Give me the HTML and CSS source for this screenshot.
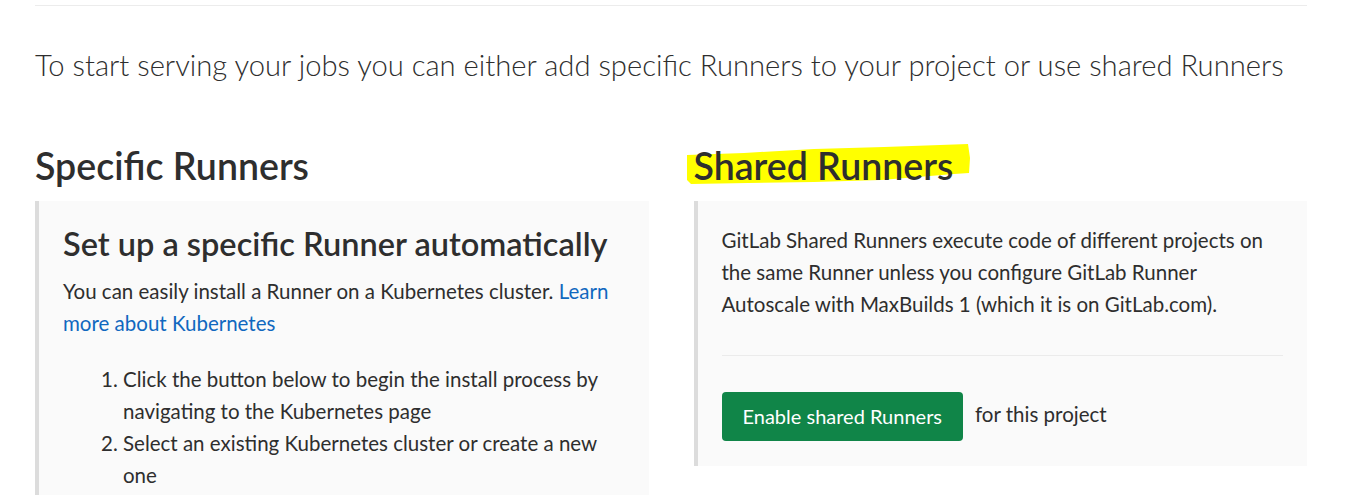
FILE: index.html
```html
<!DOCTYPE html>
<html lang="en">
<head>
<meta charset="utf-8">
<title>Runners</title>
<link rel="stylesheet" href="styles.css">
</head>
<body>
<div class="page">
  <hr class="top-rule">
  <p class="lead">To start serving your jobs you can either add specific Runners to your project or use shared Runners</p>
  <div class="columns">
    <section class="col">
      <h2 class="col-title">Specific Runners</h2>
      <div class="panel">
        <h3 class="panel-title">Set up a specific Runner automatically</h3>
        <p class="text">You can easily install a Runner on a Kubernetes cluster. <a class="link" href="#">Learn more about Kubernetes</a></p>
        <ol class="steps">
          <li>Click the button below to begin the install process by navigating to the Kubernetes page</li>
          <li>Select an existing Kubernetes cluster or create a new one</li>
        </ol>
      </div>
    </section>
    <section class="col">
      <h2 class="col-title highlighted">
        <svg class="marker" width="290" height="50" viewBox="0 0 290 50" aria-hidden="true"><polygon points="3,15 60,13 130,9 200,7 284,4 286,18 285,33 270,34 197,40 130,42 64,43 7,44 3,40" fill="#ffff00"/></svg>
        <span class="title-text">Shared Runners</span>
      </h2>
      <div class="panel panel-shared">
        <p class="text">GitLab Shared Runners execute code of different projects on the same Runner unless you configure GitLab Runner Autoscale with MaxBuilds 1 (which it is on GitLab.com).</p>
        <hr class="panel-rule">
        <div class="actions">
          <button class="btn-success" type="button">Enable shared Runners</button>
          <span class="after-btn">for this project</span>
        </div>
      </div>
    </section>
  </div>
</div>
</body>
</html>
```
FILE: styles.css
```css
html { overflow: hidden; }
body {
  margin: 0;
  background: #fff;
  color: #2e2e2e;
  font-family: Lato, "Open Sans", sans-serif;
  font-size: 20.5px;
  line-height: 32px;
}
.page {
  width: 1272px;
  padding: 5px 0 0 35px;
}
.top-rule {
  margin: 0;
  border: 0;
  border-top: 1px solid #ececec;
}
.lead {
  margin: 41px 0 0;
  font-size: 29.2px;
  font-weight: 300;
  line-height: 36px;
  color: #2e2e2e;
}
.columns {
  display: grid;
  grid-template-columns: 1fr 1fr;
  column-gap: 45px;
  margin-top: 60px;
}
.col-title {
  margin: 0 0 13px;
  font-size: 37.5px;
  font-weight: 600;
  line-height: 45px;
  color: #2e2e2e;
}
.highlighted {
  position: relative;
}
.marker {
  position: absolute;
  left: -10px;
  top: -3px;
}
.title-text {
  position: relative;
}
.panel {
  background: #fafafa;
  border-left: 4px solid #dcdcdc;
  padding: 25px 24px;
}
.panel-shared {
  padding-top: 23px;
}
.panel-title {
  margin: -1px 0 12px;
  font-size: 32.5px;
  font-weight: 600;
  line-height: 38px;
  color: #2e2e2e;
}
.text {
  margin: 0;
}
.link {
  color: #1068bf;
  text-decoration: none;
}
.steps {
  margin: 24px 0 0;
  padding-left: 60px;
}
.panel-rule {
  margin: 35px 0 36px;
  border: 0;
  border-top: 1px solid #ebebeb;
}
.actions {
  display: flex;
  align-items: center;
  gap: 12px;
}
.btn-success {
  font-family: inherit;
  font-size: 20px;
  line-height: 25px;
  padding: 12px 21px;
  border: 0;
  border-radius: 4px;
  background: #108548;
  color: #fff;
}
.after-btn {
  margin-bottom: 6px;
}
```
